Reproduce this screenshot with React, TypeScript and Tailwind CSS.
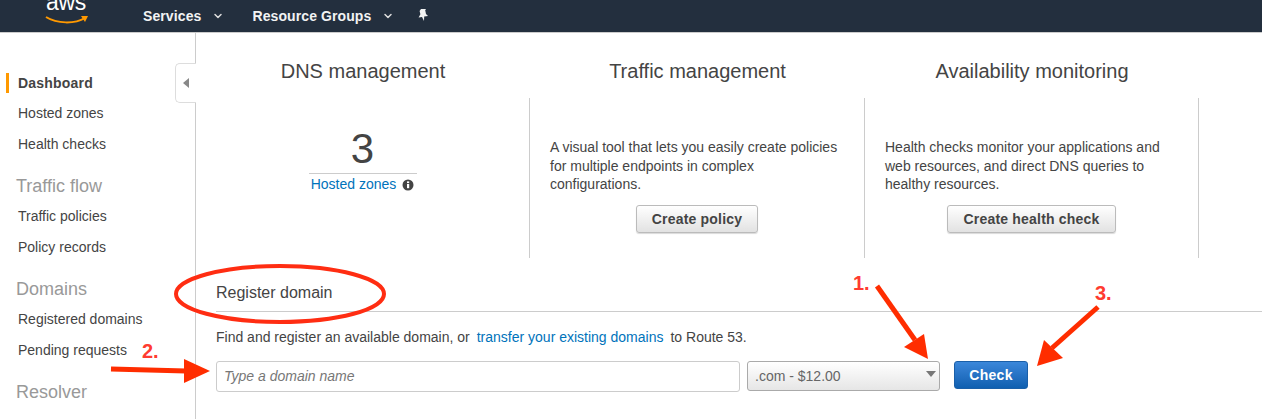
import { ChevronDown } from 'lucide-react';

const font = "font-['Liberation_Sans',Arial,sans-serif]";

function NavLink({ label, active }: { label: string; active?: boolean }) {
  return (
    <div className="relative h-[30.5px] flex items-center pl-[18px]">
      {active && <span className="absolute left-[6px] top-[5px] w-[3px] h-[20px] bg-[#ff9900]" />}
      <span className={active ? 'font-bold text-[#444] tracking-[0.2px]' : 'text-[#444]'}>{label}</span>
    </div>
  );
}

function NavHeading({ label }: { label: string }) {
  return <div className="h-[42px] pt-[11px] pl-[16px] text-[18px] leading-[30px] text-[#999]">{label}</div>;
}

function GrayButton({ label }: { label: string }) {
  return (
    <button className="h-[28px] px-[15px] rounded-[3px] border border-[#bbb] bg-gradient-to-b from-white to-[#e2e2e2] font-bold text-[#444] text-[14px] tracking-[0.2px] shadow-[0_1px_1px_rgba(0,0,0,0.15)]">
      {label}
    </button>
  );
}

function FeatureCol({ text, button }: { text: string[]; button: string }) {
  return (
    <div className="pt-[40px] px-[20px]">
      <div className="leading-[18.7px] text-[#444] h-[65px]">
        {text.map((line) => (
          <div key={line}>{line}</div>
        ))}
      </div>
      <div className="flex justify-center mt-[2px]">
        <GrayButton label={button} />
      </div>
    </div>
  );
}

export default function App() {
  return (
    <div className={`${font} relative w-[1262px] h-[419px] overflow-hidden bg-white text-[14px]`}>
      <header className="h-[33px] bg-[#232f3e] border-b border-[#ccc] flex items-center text-white relative">
        <div className="w-[143px] relative h-full">
          <span className="absolute left-[46px] top-[-11px] text-[23px] leading-[26px] tracking-[-0.3px]">aws</span>
          <svg className="absolute left-[45px] top-[14px]" width="44" height="11" viewBox="0 0 44 11">
            <path d="M1 3 C12 10 30 10 40 4" fill="none" stroke="#ff9900" strokeWidth="2" />
            <path d="M36 2 L43 2 L40 8 Z" fill="#ff9900" />
          </svg>
        </div>
        <span className="font-bold text-[#f2f3f3] tracking-[0.1px]">Services</span>
        <ChevronDown className="ml-[11px] text-[#ddd]" size={12} strokeWidth={3} />
        <span className="ml-[28px] font-bold text-[#f2f3f3] tracking-[0.1px]">Resource Groups</span>
        <ChevronDown className="ml-[11px] text-[#ddd]" size={12} strokeWidth={3} />
        <svg className="ml-[22px] mb-[3px]" width="14" height="14" viewBox="0 0 14 14">
          <path d="M5 1 L10 1 L9.2 2.3 L10 6 L12 8 L8.2 8.6 L8 13 L6 9 L2.6 9.4 L4.4 6.2 L3.6 3 Z" fill="#f2f3f3" />
        </svg>
      </header>

      <div className="flex h-[386px]">
        <aside className="w-[196px] shrink-0 border-r border-[#ccc] pt-[35px]">
          <NavLink label="Dashboard" active />
          <NavLink label="Hosted zones" />
          <NavLink label="Health checks" />
          <NavHeading label="Traffic flow" />
          <NavLink label="Traffic policies" />
          <NavLink label="Policy records" />
          <NavHeading label="Domains" />
          <NavLink label="Registered domains" />
          <NavLink label="Pending requests" />
          <NavHeading label="Resolver" />
        </aside>

        <main className="flex-1 min-w-0">
          <div className="flex h-[65px] pt-[24px] text-[20px] leading-[28px] text-[#444] text-center">
            <div className="w-[334px]">DNS management</div>
            <div className="w-[335px]">Traffic management</div>
            <div className="w-[334px]">Availability monitoring</div>
          </div>
          <div className="flex h-[160px]">
            <div className="w-[334px] border-r border-[#ccc] flex flex-col items-center pt-[27px]">
              <div className="text-[42px] leading-[48px] text-[#444]">3</div>
              <div className="w-[108px] border-t border-[#ccc] flex items-center justify-center gap-[6px] h-[22px] mt-[0px]">
                <span className="text-[#0073bb]">Hosted zones</span>
                <svg width="12" height="12" viewBox="0 0 12 12">
                  <circle cx="6" cy="6" r="5.5" fill="#444" />
                  <rect x="5" y="5" width="2.2" height="4.2" fill="#fff" />
                  <rect x="5" y="2.4" width="2.2" height="1.7" fill="#fff" />
                </svg>
              </div>
            </div>
            <div className="w-[335px] border-r border-[#ccc]">
              <FeatureCol
                text={['A visual tool that lets you easily create policies', 'for multiple endpoints in complex', 'configurations.']}
                button="Create policy"
              />
            </div>
            <div className="w-[334px] border-r border-[#ccc]">
              <FeatureCol
                text={['Health checks monitor your applications and', 'web resources, and direct DNS queries to', 'healthy resources.']}
                button="Create health check"
              />
            </div>
          </div>

          <div className="pl-[20px] pt-[21px]">
            <div className="h-[33px] border-b border-[#ccc] text-[16px] leading-[28px] text-[#444]">Register domain</div>
            <p className="mt-[15px] leading-[20px] text-[#444]">
              Find and register an available domain, or
              <span className="text-[#0073bb] ml-[7px] mr-[7px]">transfer your existing domains</span>
              to Route 53.
            </p>
            <div className="flex items-start mt-[14px]">
              <div className="w-[524px] h-[31px] border border-[#ccc] rounded-[3px] flex items-center pl-[7px] italic text-[#777]">
                Type a domain name
              </div>
              <div className="relative ml-[7px] w-[193px] h-[30px] border border-[#aaa] rounded-[3px] bg-gradient-to-b from-white to-[#e6e6e6] flex items-center pl-[7px] text-[#666]">
                .com - $12.00
                <span className="absolute right-[3px] top-[9px] w-0 h-0 border-x-[5px] border-x-transparent border-t-[6px] border-t-[#777]" />
              </div>
              <button className="ml-[14px] w-[74px] h-[28px] rounded-[3px] border border-[#1a5fa8] bg-gradient-to-b from-[#3a87da] to-[#0e5fb0] text-white font-bold tracking-[0.3px]">
                Check
              </button>
            </div>
          </div>
        </main>
      </div>

      {/* sidebar collapse tab */}
      <div className="absolute left-[175px] top-[63px] w-[21px] h-[40px] bg-white border border-r-0 border-[#ddd] rounded-l-[5px] flex items-center justify-center">
        <span className="w-0 h-0 border-y-[5px] border-y-transparent border-r-[6px] border-r-[#888]" />
      </div>

      {/* annotations */}
      <svg className="absolute left-0 top-0 pointer-events-none" width="1262" height="419" viewBox="0 0 1262 419">
        <ellipse cx="280" cy="294" rx="104" ry="28" fill="none" stroke="#ff2d12" strokeWidth="4" />
        <path d="M111 369 L186 371" stroke="#ff2d00" strokeWidth="5" fill="none" />
        <path d="M184 359 L210 371 L184 383 Z" fill="#ff2d00" />
        <path d="M877 286 L915 340" stroke="#ff2d00" strokeWidth="5" fill="none" />
        <path d="M904 347 L924 334 L928 359 Z" fill="#ff2d00" />
        <path d="M1098 307 L1052 348" stroke="#ff2d00" strokeWidth="5" fill="none" />
        <path d="M1044 340 L1063 358 L1037 366 Z" fill="#ff2d00" />
      </svg>
      <span className="absolute left-[142px] top-[339px] text-[20px] leading-[24px] font-bold text-[#ff3b30]">2.</span>
      <span className="absolute left-[853px] top-[271px] text-[20px] leading-[24px] font-bold text-[#ff3b30]">1.</span>
      <span className="absolute left-[1095px] top-[281px] text-[20px] leading-[24px] font-bold text-[#ff3b30]">3.</span>
    </div>
  );
}
